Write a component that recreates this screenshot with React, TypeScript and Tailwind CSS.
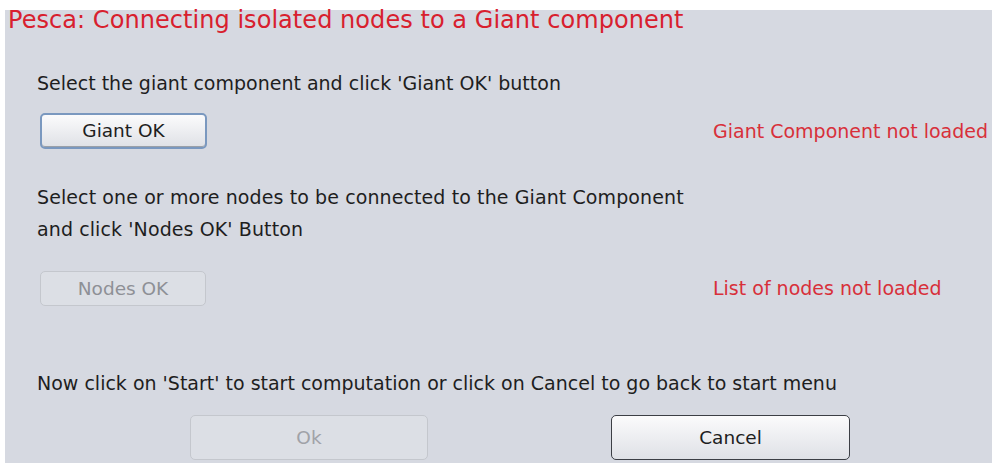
import React from "react";

const font = { fontFamily: '"DejaVu Sans", sans-serif' };

export default function App() {
  return (
    <div className="w-[1000px] h-[474px] bg-white pt-[10px] pl-[5px]" style={font}>
      <div className="w-[987px] h-[453px] bg-[#d6d9e1] flex flex-col">
        <div className="h-[20px] flex items-center pl-[3px] text-[24px] text-[#d8202e] leading-none tracking-[0.05px] whitespace-nowrap">
          Pesca: Connecting isolated nodes to a Giant component
        </div>
        <div className="pl-[32px] mt-[37px] text-[19px] text-[#1e1e1e] leading-[32px] h-[32px] whitespace-nowrap">
          Select the giant component and click 'Giant OK' button
        </div>
        <div className="flex items-center mt-[14px] h-[36px]">
          <button className="ml-[35px] w-[167px] h-[36px] rounded-[5px] border-2 border-[#7a98bf] bg-gradient-to-b from-[#fbfbfc] to-[#dfe1e6] text-[18.5px] text-[#1e1e1e] shadow-[inset_0_-1px_0_#9aa0a8]">
            Giant OK
          </button>
          <div className="ml-[506px] text-[19px] text-[#d8303a] whitespace-nowrap">Giant Component not loaded</div>
        </div>
        <div className="pl-[32px] mt-[32px] text-[19px] text-[#1e1e1e] leading-[32px] whitespace-nowrap tracking-[0.1px]">
          <div>Select one or more nodes to be connected to the Giant Component</div>
          <div>and click 'Nodes OK' Button</div>
        </div>
        <div className="flex items-center mt-[26px] h-[35px]">
          <button className="ml-[35px] w-[166px] h-[35px] rounded-[5px] border border-[#c4c7cd] bg-[#dcdfe5] text-[18.5px] text-[#8e9096]">
            Nodes OK
          </button>
          <div className="ml-[507px] text-[19px] text-[#d8303a] whitespace-nowrap">List of nodes not loaded</div>
        </div>
        <div className="pl-[32px] mt-[61px] text-[19px] text-[#1e1e1e] leading-[32px] whitespace-nowrap">
          Now click on 'Start' to start computation or click on Cancel to go back to start menu
        </div>
        <div className="flex mt-[16px] h-[45px]">
          <button className="ml-[185px] w-[238px] h-[45px] rounded-[5px] border border-[#c4c7cd] bg-[#dcdfe5] text-[18.5px] text-[#a0a2a8]">
            Ok
          </button>
          <button className="ml-[183px] w-[239px] h-[45px] rounded-[5px] border border-[#3c3f45] bg-gradient-to-b from-[#fbfbfc] to-[#dfe1e6] text-[18.5px] text-[#1e1e1e]">
            Cancel
          </button>
        </div>
      </div>
    </div>
  );
}
